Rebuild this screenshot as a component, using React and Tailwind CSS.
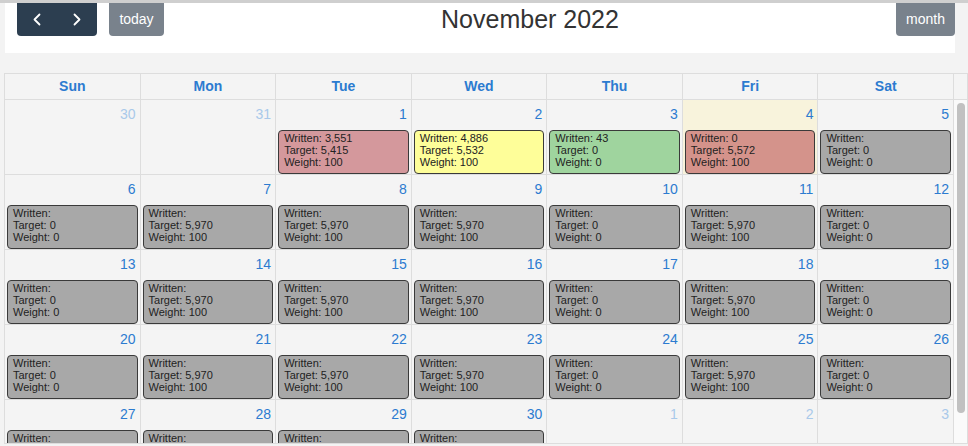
import React from "react";

const DAYS = ["Sun", "Mon", "Tue", "Wed", "Thu", "Fri", "Sat"];

const COLORS = {
  red: "bg-[#d4989c]",
  yellow: "bg-[#fefe99]",
  green: "bg-[#9fd49e]",
  salmon: "bg-[#d4938b]",
  gray: "bg-[#a8a8a8]",
};

const g0 = { c: "gray", w: "", t: "0", wt: "0" };
const g5 = { c: "gray", w: "", t: "5,970", wt: "100" };

const weeks = [
  [
    { d: 30, other: true },
    { d: 31, other: true },
    { d: 1, ev: { c: "red", w: "3,551", t: "5,415", wt: "100" } },
    { d: 2, ev: { c: "yellow", w: "4,886", t: "5,532", wt: "100" } },
    { d: 3, ev: { c: "green", w: "43", t: "0", wt: "0" } },
    { d: 4, today: true, ev: { c: "salmon", w: "0", t: "5,572", wt: "100" } },
    { d: 5, ev: g0 },
  ],
  [
    { d: 6, ev: g0 },
    { d: 7, ev: g5 },
    { d: 8, ev: g5 },
    { d: 9, ev: g5 },
    { d: 10, ev: g0 },
    { d: 11, ev: g5 },
    { d: 12, ev: g0 },
  ],
  [
    { d: 13, ev: g0 },
    { d: 14, ev: g5 },
    { d: 15, ev: g5 },
    { d: 16, ev: g5 },
    { d: 17, ev: g0 },
    { d: 18, ev: g5 },
    { d: 19, ev: g0 },
  ],
  [
    { d: 20, ev: g0 },
    { d: 21, ev: g5 },
    { d: 22, ev: g5 },
    { d: 23, ev: g5 },
    { d: 24, ev: g0 },
    { d: 25, ev: g5 },
    { d: 26, ev: g0 },
  ],
  [
    { d: 27, ev: g0 },
    { d: 28, ev: g5 },
    { d: 29, ev: g5 },
    { d: 30, ev: g5 },
    { d: 1, other: true },
    { d: 2, other: true },
    { d: 3, other: true },
  ],
];

function Chevron({ dir }) {
  return (
    <svg width="10" height="13" viewBox="0 0 10 13" fill="none">
      <path
        d={dir === "left" ? "M7.5 1.5 2.5 6.5l5 5" : "M2.5 1.5l5 5-5 5"}
        stroke="white"
        strokeWidth="1.8"
        strokeLinecap="round"
        strokeLinejoin="round"
      />
    </svg>
  );
}

function DayCell({ cell }) {
  return (
    <div
      className={`h-[74px] border-r border-[#dddddd] ${cell.today ? "bg-[#f8f3dc]" : ""}`}
    >
      <div
        className={`h-[30px] pt-[4px] pr-[4px] text-right text-[14px] leading-[20px] ${
          cell.other ? "text-[#a9c9ea]" : "text-[#2c7bd0]"
        }`}
      >
        {cell.d}
      </div>
      {cell.ev && (
        <div
          className={`mx-[2px] h-[44px] rounded-[4px] border border-[#3a3a3a] pl-[5px] pt-[1px] text-[11px] leading-[12px] text-[#222] ${COLORS[cell.ev.c]}`}
        >
          <div>Written: {cell.ev.w}</div>
          <div>Target: {cell.ev.t}</div>
          <div>Weight: {cell.ev.wt}</div>
        </div>
      )}
    </div>
  );
}

export default function App() {
  return (
    <div className="w-[968px] h-[446px] overflow-hidden bg-[#f3f3f3] font-['Liberation_Sans',Arial,sans-serif]">
      <div className="h-[3px] bg-[#cfcfcf]" />

      {/* toolbar */}
      <div className="ml-[5px] w-[950px] h-[50px] bg-white flex justify-between items-start pl-[12px]">
        <div className="flex gap-[12px]">
          <div className="flex w-[80px] h-[33px] bg-[#2c3e50] rounded-b-[4px]">
            <button className="w-[40px] h-full flex items-center justify-center">
              <Chevron dir="left" />
            </button>
            <button className="w-[40px] h-full flex items-center justify-center">
              <Chevron dir="right" />
            </button>
          </div>
          <button className="w-[55px] h-[33px] bg-[#79828c] rounded-b-[4px] text-white text-[14px] leading-[33px]">
            today
          </button>
        </div>
        <h2 className="mt-[4px] text-[25px] leading-[25px] text-[#333333]">November 2022</h2>
        <button className="w-[59px] h-[33px] bg-[#79828c] rounded-b-[4px] text-white text-[14px] leading-[33px]">
          month
        </button>
      </div>

      {/* calendar */}
      <div className="mt-[20px] ml-[4px] w-[964px] border-t border-l border-r border-[#dddddd] bg-[#f4f4f4]">
        <div className="flex h-[26px] border-b border-[#dddddd]">
          <div className="grid grid-cols-7 w-[949px]">
            {DAYS.map((d) => (
              <div
                key={d}
                className="border-r border-[#dddddd] text-center text-[14px] font-bold leading-[25px] text-[#2c7bd0]"
              >
                {d}
              </div>
            ))}
          </div>
          <div className="flex-1" />
        </div>

        <div className="flex h-[344px] border-b border-[#dddddd] overflow-hidden">
          <div className="w-[949px]">
            {weeks.map((week, i) => (
              <div key={i} className="grid grid-cols-7 h-[75px] border-b border-[#dddddd]">
                {week.map((cell, j) => (
                  <DayCell key={j} cell={cell} />
                ))}
              </div>
            ))}
          </div>
          <div className="flex-1 bg-[#fafafa] pt-[3px] pl-[3px]">
            <div className="w-[8px] h-[310px] rounded-full bg-[#c1c1c1]" />
          </div>
        </div>
      </div>
    </div>
  );
}
